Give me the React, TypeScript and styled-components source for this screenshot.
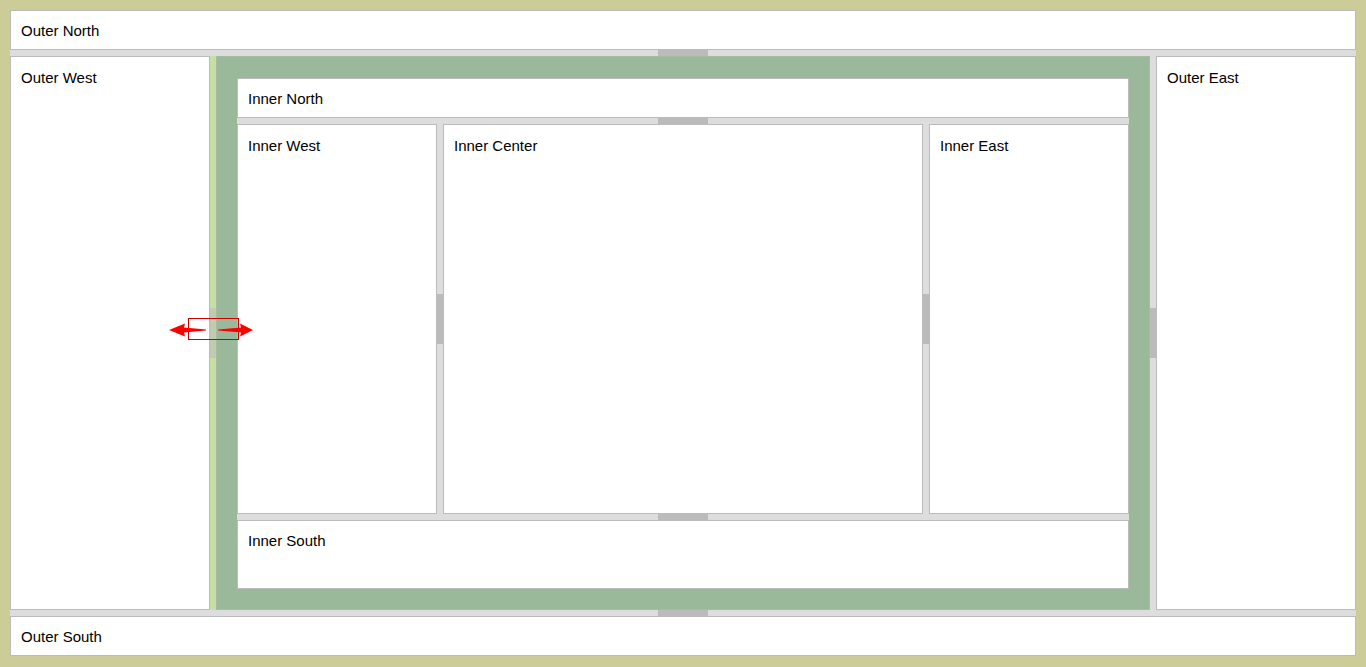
import React from "react";
import styled, { createGlobalStyle } from "styled-components";

const GlobalStyle = createGlobalStyle`
  html, body { margin: 0; padding: 0; }
  body {
    background: #cccc99;
    font-family: "Liberation Sans", Arial, sans-serif;
    font-size: 15px;
    color: #000;
  }
  * { box-sizing: border-box; }
`;

const Page = styled.div`
  position: relative;
  height: 667px;
  padding: 10px 10px 11px 10px;
  display: flex;
  flex-direction: column;
`;

const Pane = styled.div<{ $h?: number; $w?: number; $top?: number }>`
  background: #fff;
  border: 1px solid #bbb;
  padding: ${(p) => p.$top ?? 10}px 10px 10px 10px;
  line-height: 19px;
  overflow: hidden;
  ${(p) => (p.$h ? `height: ${p.$h}px; flex: none;` : "")}
  ${(p) => (p.$w ? `width: ${p.$w}px; flex: none;` : "")}
`;

const Row = styled.div`
  flex: 1;
  display: flex;
  min-height: 0;
`;

const CenterPane = styled.div`
  flex: 1;
  min-width: 0;
  background: #9ab99a;
  border: 1px solid #a9b9a2;
  padding: 21px 20px 20px 20px;
  display: flex;
  flex-direction: column;
`;

const FlexPane = styled(Pane)`
  flex: 1;
  min-width: 0;
`;

const HResizer = styled.div`
  height: 6px;
  flex: none;
  background: #dddddd;
  display: flex;
  justify-content: center;
`;

const VResizer = styled.div<{ $bg?: string }>`
  width: 6px;
  flex: none;
  background: ${(p) => p.$bg || "#dddddd"};
  display: flex;
  flex-direction: column;
  justify-content: center;
`;

const HToggler = styled.div`
  width: 50px;
  height: 100%;
  background: #bbbbbb;
`;

const VToggler = styled.div<{ $bg?: string }>`
  height: 50px;
  width: 100%;
  background: ${(p) => p.$bg || "#bbbbbb"};
`;

const DragCursor = styled.svg`
  position: absolute;
  left: 160px;
  top: 315px;
  width: 100px;
  height: 30px;
  overflow: visible;
`;

export default function App() {
  return (
    <>
      <GlobalStyle />
      <Page>
        <Pane $h={40}>Outer North</Pane>
        <HResizer>
          <HToggler />
        </HResizer>
        <Row>
          <Pane $w={200} $top={11}>Outer West</Pane>
          <VResizer $bg="#c4e0a4">
            <VToggler $bg="#bfccb0" />
          </VResizer>
          <CenterPane>
            <Pane $h={40}>Inner North</Pane>
            <HResizer>
              <HToggler />
            </HResizer>
            <Row>
              <Pane $w={200} $top={11}>Inner West</Pane>
              <VResizer>
                <VToggler />
              </VResizer>
              <FlexPane $top={11}>Inner Center</FlexPane>
              <VResizer>
                <VToggler />
              </VResizer>
              <Pane $w={200} $top={11}>Inner East</Pane>
            </Row>
            <HResizer>
              <HToggler />
            </HResizer>
            <Pane $h={69}>Inner South</Pane>
          </CenterPane>
          <VResizer>
            <VToggler />
          </VResizer>
          <Pane $w={200} $top={11}>Outer East</Pane>
        </Row>
        <HResizer>
          <HToggler />
        </HResizer>
        <Pane $h={40}>Outer South</Pane>
        <DragCursor viewBox="0 0 100 30">
          <rect x="28.5" y="3.5" width="50" height="21" fill="none" stroke="#cc0000" strokeWidth="1" />
          <polygon
            points="9,15 25,8.5 24,12.5 46,14.6 46,15.4 24,17.5 25,21.5"
            fill="#ff0000"
          />
          <polygon
            points="93,15 80,8.5 81,12.5 58,14.6 58,15.4 81,17.5 80,21.5"
            fill="#ff0000"
          />
        </DragCursor>
      </Page>
    </>
  );
}
